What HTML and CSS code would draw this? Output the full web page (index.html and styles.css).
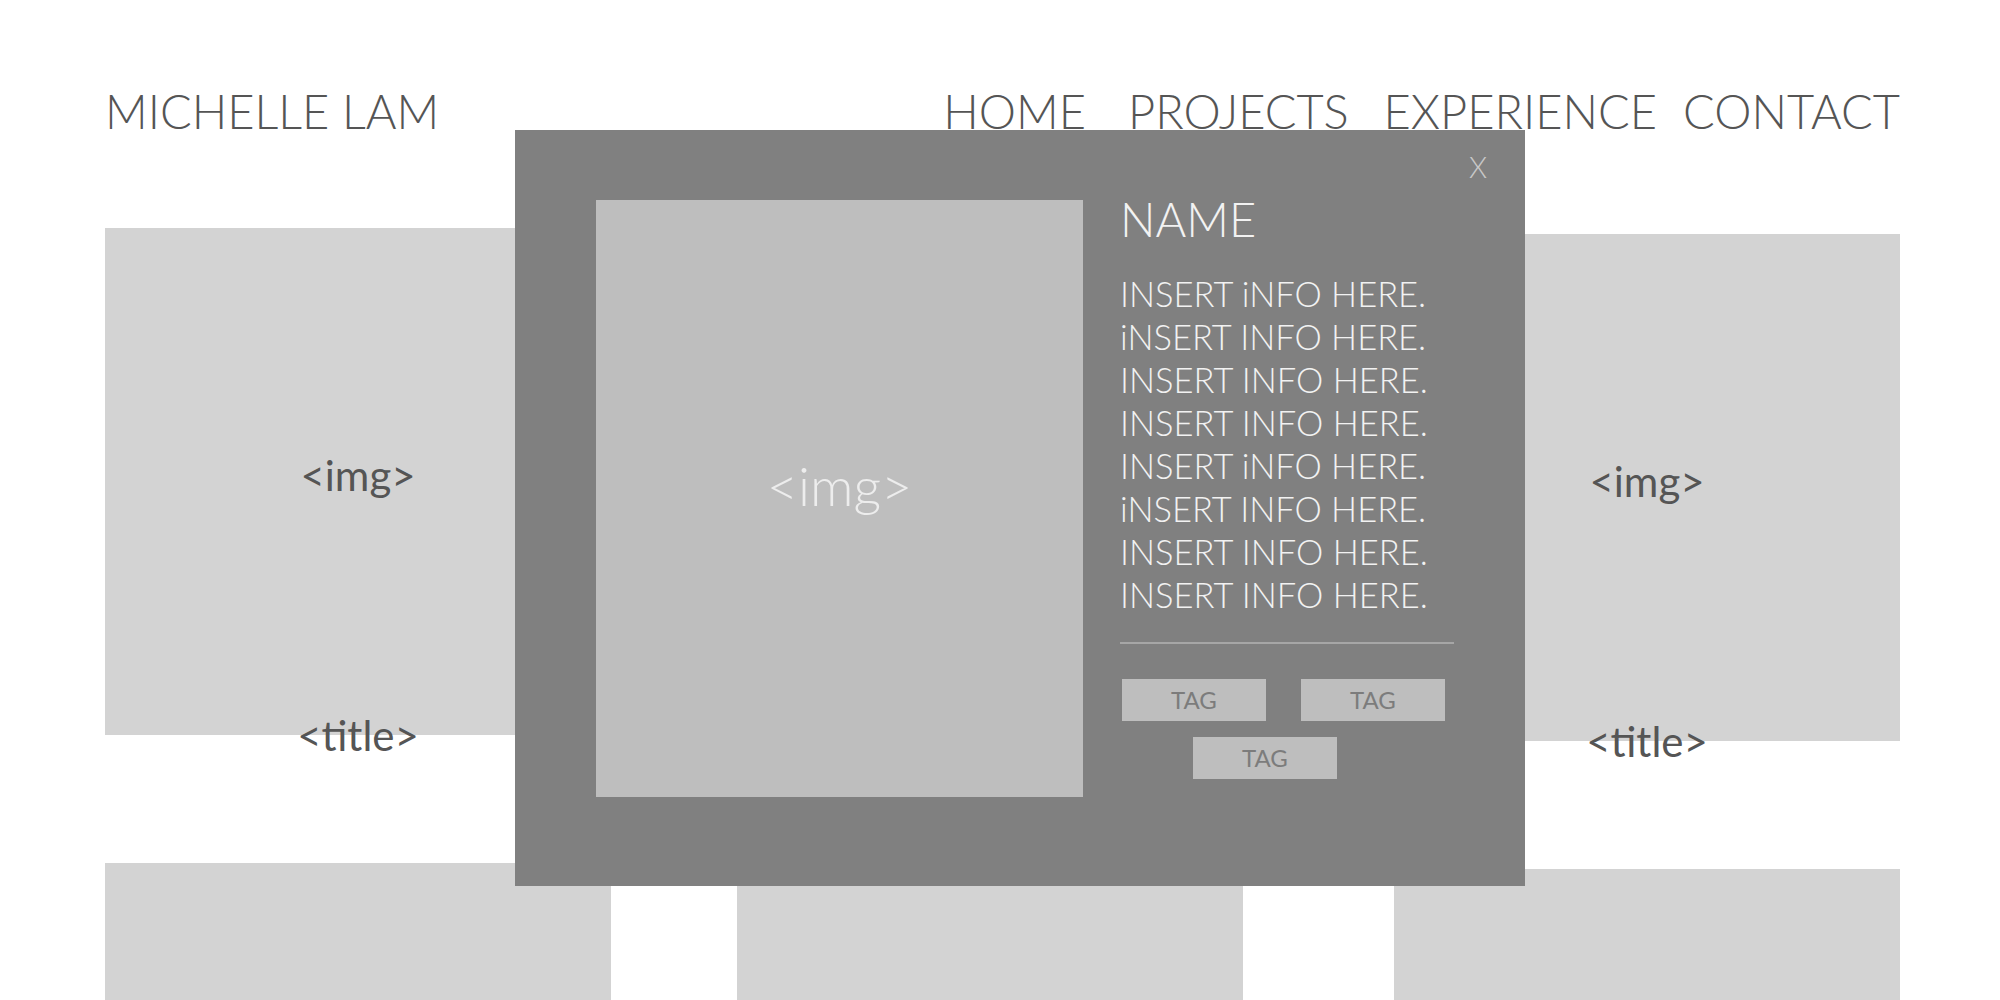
FILE: index.html
```html
<!DOCTYPE html>
<html lang="en">
<head>
    <meta charset="UTF-8">
    <meta name="viewport" content="width=device-width, initial-scale=1.0">
    <title>Michelle Lam</title>
    <link rel="stylesheet" href="styles.css">
</head>
<body class="modal-open">
    <div class="page">
        <header class="header">
            <div class="logo">MICHELLE LAM</div>
            <nav class="nav">
                <a href="#">HOME</a>
                <a href="#">PROJECTS</a>
                <a href="#">EXPERIENCE</a>
                <a href="#">CONTACT</a>
            </nav>
        </header>

        <div class="projects">
            <div class="project">
                <div class="thumb">&lt;img&gt;</div>
                <div class="title">&lt;title&gt;</div>
            </div>
            <div class="project">
                <div class="thumb">&lt;img&gt;</div>
                <div class="title">&lt;title&gt;</div>
            </div>
            <div class="project">
                <div class="thumb">&lt;img&gt;</div>
                <div class="title">&lt;title&gt;</div>
            </div>
            <div class="project">
                <div class="thumb">&lt;img&gt;</div>
                <div class="title">&lt;title&gt;</div>
            </div>
            <div class="project">
                <div class="thumb">&lt;img&gt;</div>
                <div class="title">&lt;title&gt;</div>
            </div>
            <div class="project">
                <div class="thumb">&lt;img&gt;</div>
                <div class="title">&lt;title&gt;</div>
            </div>
        </div>
    </div>

    <div class="modal">
        <span class="close">X</span>
        <div class="modal-img">&lt;img&gt;</div>
        <div class="modal-info">
            <h2 class="modal-name">NAME</h2>
            <div class="modal-text">
                INSERT iNFO HERE.<br>
                iNSERT INFO HERE.<br>
                INSERT INFO HERE.<br>
                INSERT INFO HERE.<br>
                INSERT iNFO HERE.<br>
                iNSERT INFO HERE.<br>
                INSERT INFO HERE.<br>
                INSERT INFO HERE.
            </div>
            <hr class="divider">
            <div class="tags">
                <span class="tag">TAG</span>
                <span class="tag">TAG</span>
                <span class="tag tag-last">TAG</span>
            </div>
        </div>
    </div>
</body>
</html>
```

FILE: styles.css
```css
body { margin: 0; font-family: Lato, "Liberation Sans", sans-serif; font-weight: 300; color: #555; }
body.modal-open { overflow: hidden; }
.page { padding: 0 100px 0 105px; }

.header { display: flex; justify-content: space-between; padding-top: 87px; font-size: 47px; line-height: 49px; white-space: nowrap; }
.nav { display: flex; }
.nav a { color: #555; text-decoration: none; }
.nav a:nth-child(2) { margin-left: 42px; }
.nav a:nth-child(3) { margin-left: 35px; }
.nav a:nth-child(4) { margin-left: 26px; }

.projects { display: grid; grid-template-columns: repeat(3, 506px); justify-content: space-between; row-gap: 104px; margin-top: 92px; }
.project:nth-child(3n+2) { margin-left: -13px; }
.project:nth-child(3n) { margin-top: 6px; }
.thumb { width: 506px; height: 507px; box-sizing: border-box; padding-bottom: 14px; background: #d3d3d3; display: flex; align-items: center; justify-content: center; font-size: 42px; font-weight: 400; }
.title { margin-top: -18px; text-align: center; font-size: 42px; line-height: 36px; font-weight: 400; }

.modal { position: absolute; left: 515px; top: 130px; width: 1010px; height: 756px; box-sizing: border-box; padding: 70px 0 0 81px; background: #808080; display: flex; align-items: flex-start; gap: 37px; }
.close { position: absolute; top: 22px; right: 38px; font-size: 29px; line-height: 29px; color: #c8c8c8; }
.modal-img { width: 487px; height: 597px; background: #bebebe; display: flex; align-items: center; justify-content: center; font-size: 54px; color: #ededed; padding-bottom: 26px; box-sizing: border-box; }
.modal-info { width: 334px; color: #f2f2f2; white-space: nowrap; }
.modal-name { margin: -1px 0 0; font-size: 47px; line-height: 40px; font-weight: 300; }
.modal-text { margin-top: 33px; font-size: 34.5px; line-height: 43px; }
.divider { margin: 26px 0 0; border: 0; height: 2px; background: #a6a6a6; }
.tags { display: flex; flex-wrap: wrap; width: 324px; margin: 35px 0 0 2px; column-gap: 35px; row-gap: 16px; }
.tag { width: 144px; height: 42px; background: #bebebe; color: #7c7c7c; font-size: 24px; line-height: 42px; font-weight: 400; text-align: center; }
.tag-last { margin-left: 71px; }
```
